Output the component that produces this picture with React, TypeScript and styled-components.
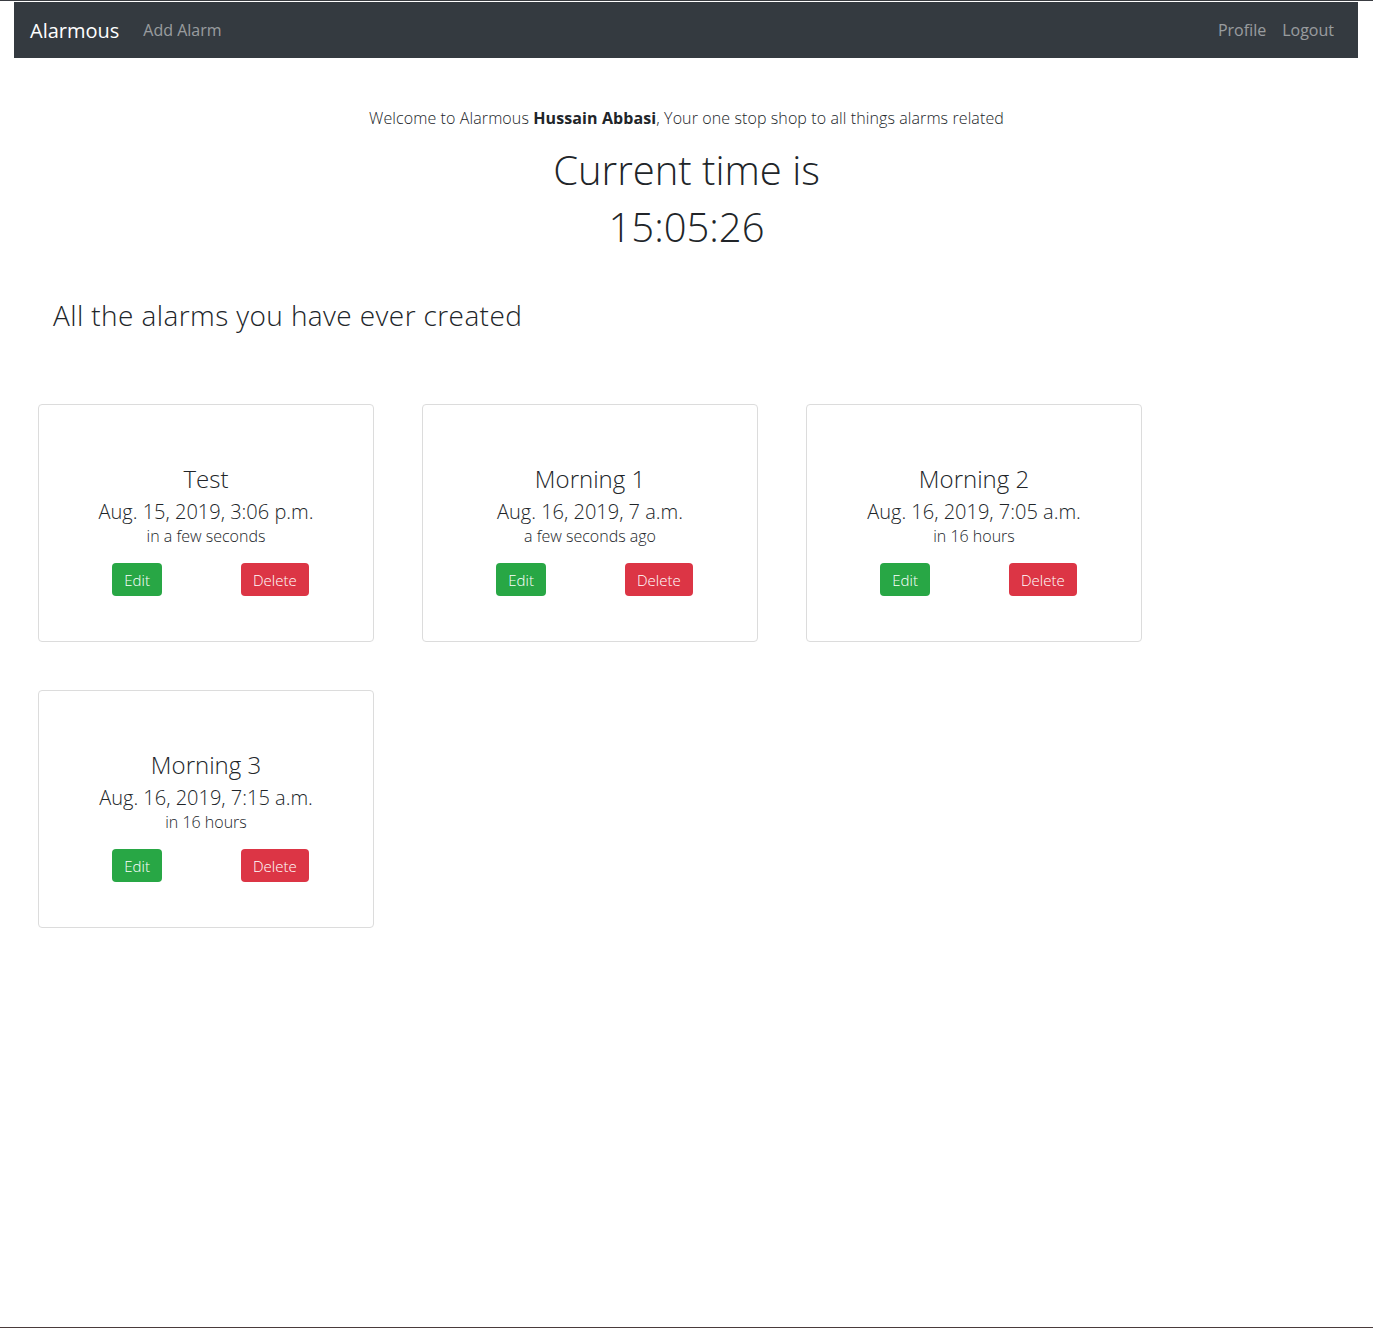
import React from "react";
import styled, { createGlobalStyle } from "styled-components";

const GlobalStyle = createGlobalStyle`
  *, *::before, *::after { box-sizing: border-box; }
  body {
    margin: 0;
    background: #fff;
    color: #212529;
    font-family: "Open Sans", "Noto Sans", sans-serif;
    font-weight: 300;
  }
`;

const Page = styled.div`
  min-height: 1328px;
  border-top: 1px solid #3a3d42;
  border-bottom: 1px solid #4a3b3b;
`;

const Navbar = styled.nav`
  display: flex;
  align-items: center;
  height: 56px;
  margin: 1px 15px 0 14px;
  padding: 0 16px;
  background: #343a40;
`;

const Brand = styled.a`
  color: #fff;
  font-size: 20px;
  font-weight: 400;
  margin-right: 16px;
  text-decoration: none;
`;

const NavGroup = styled.div<{ $right?: boolean }>`
  display: flex;
  align-items: center;
  margin-left: ${(p) => (p.$right ? "auto" : "0")};
`;

const NavLink = styled.a`
  color: rgba(255, 255, 255, 0.5);
  font-size: 16px;
  font-weight: 400;
  padding: 0 8px;
  text-decoration: none;
`;

const Hero = styled.header`
  text-align: center;
  padding-top: 48px;
`;

const Welcome = styled.p`
  margin: 0 0 16px;
  font-size: 16px;
  line-height: 24px;
  letter-spacing: 0.1px;
  b { font-weight: 700; }
`;

const Clock = styled.h1<{ $last?: boolean }>`
  margin: 0 0 ${(p) => (p.$last ? "0" : "9px")};
  font-size: 40px;
  line-height: 48px;
  font-weight: 300;
`;

const SectionTitle = styled.h3`
  margin: 47px 0 72px;
  padding-left: 53px;
  font-size: 28px;
  line-height: 34px;
  font-weight: 300;
  letter-spacing: 0.4px;
`;

const Grid = styled.section`
  display: grid;
  grid-template-columns: repeat(3, 336px);
  column-gap: 48px;
  row-gap: 48px;
  padding-left: 38px;
`;

const Card = styled.div`
  display: flex;
  flex-direction: column;
  align-items: center;
  height: 238px;
  padding: 59px 20px 0;
  border: 1px solid #dcdcdc;
  border-radius: 4px;
  text-align: center;
`;

const Title = styled.h4`
  margin: 0 0 7px;
  font-size: 24px;
  line-height: 29px;
  font-weight: 300;
`;

const DateLine = styled.div`
  font-size: 20px;
  line-height: 24px;
`;

const Relative = styled.div`
  font-size: 16px;
  line-height: 24px;
`;

const ButtonRow = styled.div`
  display: flex;
  justify-content: center;
  gap: 79px;
  margin-top: 15px;
  padding-left: 9px;
`;

const Button = styled.button<{ $variant: "success" | "danger" }>`
  height: 33px;
  padding: 0 12px;
  border: none;
  border-radius: 4px;
  color: #fff;
  font-family: inherit;
  font-size: 15px;
  font-weight: 300;
  background: ${(p) => (p.$variant === "success" ? "#28a745" : "#dc3545")};
  cursor: pointer;
`;

const alarms = [
  { name: "Test", date: "Aug. 15, 2019, 3:06 p.m.", rel: "in a few seconds" },
  { name: "Morning 1", date: "Aug. 16, 2019, 7 a.m.", rel: "a few seconds ago" },
  { name: "Morning 2", date: "Aug. 16, 2019, 7:05 a.m.", rel: "in 16 hours" },
  { name: "Morning 3", date: "Aug. 16, 2019, 7:15 a.m.", rel: "in 16 hours" },
];

export default function App() {
  return (
    <>
      <GlobalStyle />
      <Page>
        <Navbar>
          <NavGroup>
            <Brand href="#">Alarmous</Brand>
            <NavLink href="#">Add Alarm</NavLink>
          </NavGroup>
          <NavGroup $right>
            <NavLink href="#">Profile</NavLink>
            <NavLink href="#">Logout</NavLink>
          </NavGroup>
        </Navbar>
        <Hero>
          <Welcome>
            Welcome to Alarmous <b>Hussain Abbasi</b>, Your one stop shop to all things alarms related
          </Welcome>
          <Clock>Current time is</Clock>
          <Clock $last>15:05:26</Clock>
        </Hero>
        <SectionTitle>All the alarms you have ever created</SectionTitle>
        <Grid>
          {alarms.map((a) => (
            <Card key={a.name}>
              <Title>{a.name}</Title>
              <DateLine>{a.date}</DateLine>
              <Relative>{a.rel}</Relative>
              <ButtonRow>
                <Button $variant="success">Edit</Button>
                <Button $variant="danger">Delete</Button>
              </ButtonRow>
            </Card>
          ))}
        </Grid>
      </Page>
    </>
  );
}
